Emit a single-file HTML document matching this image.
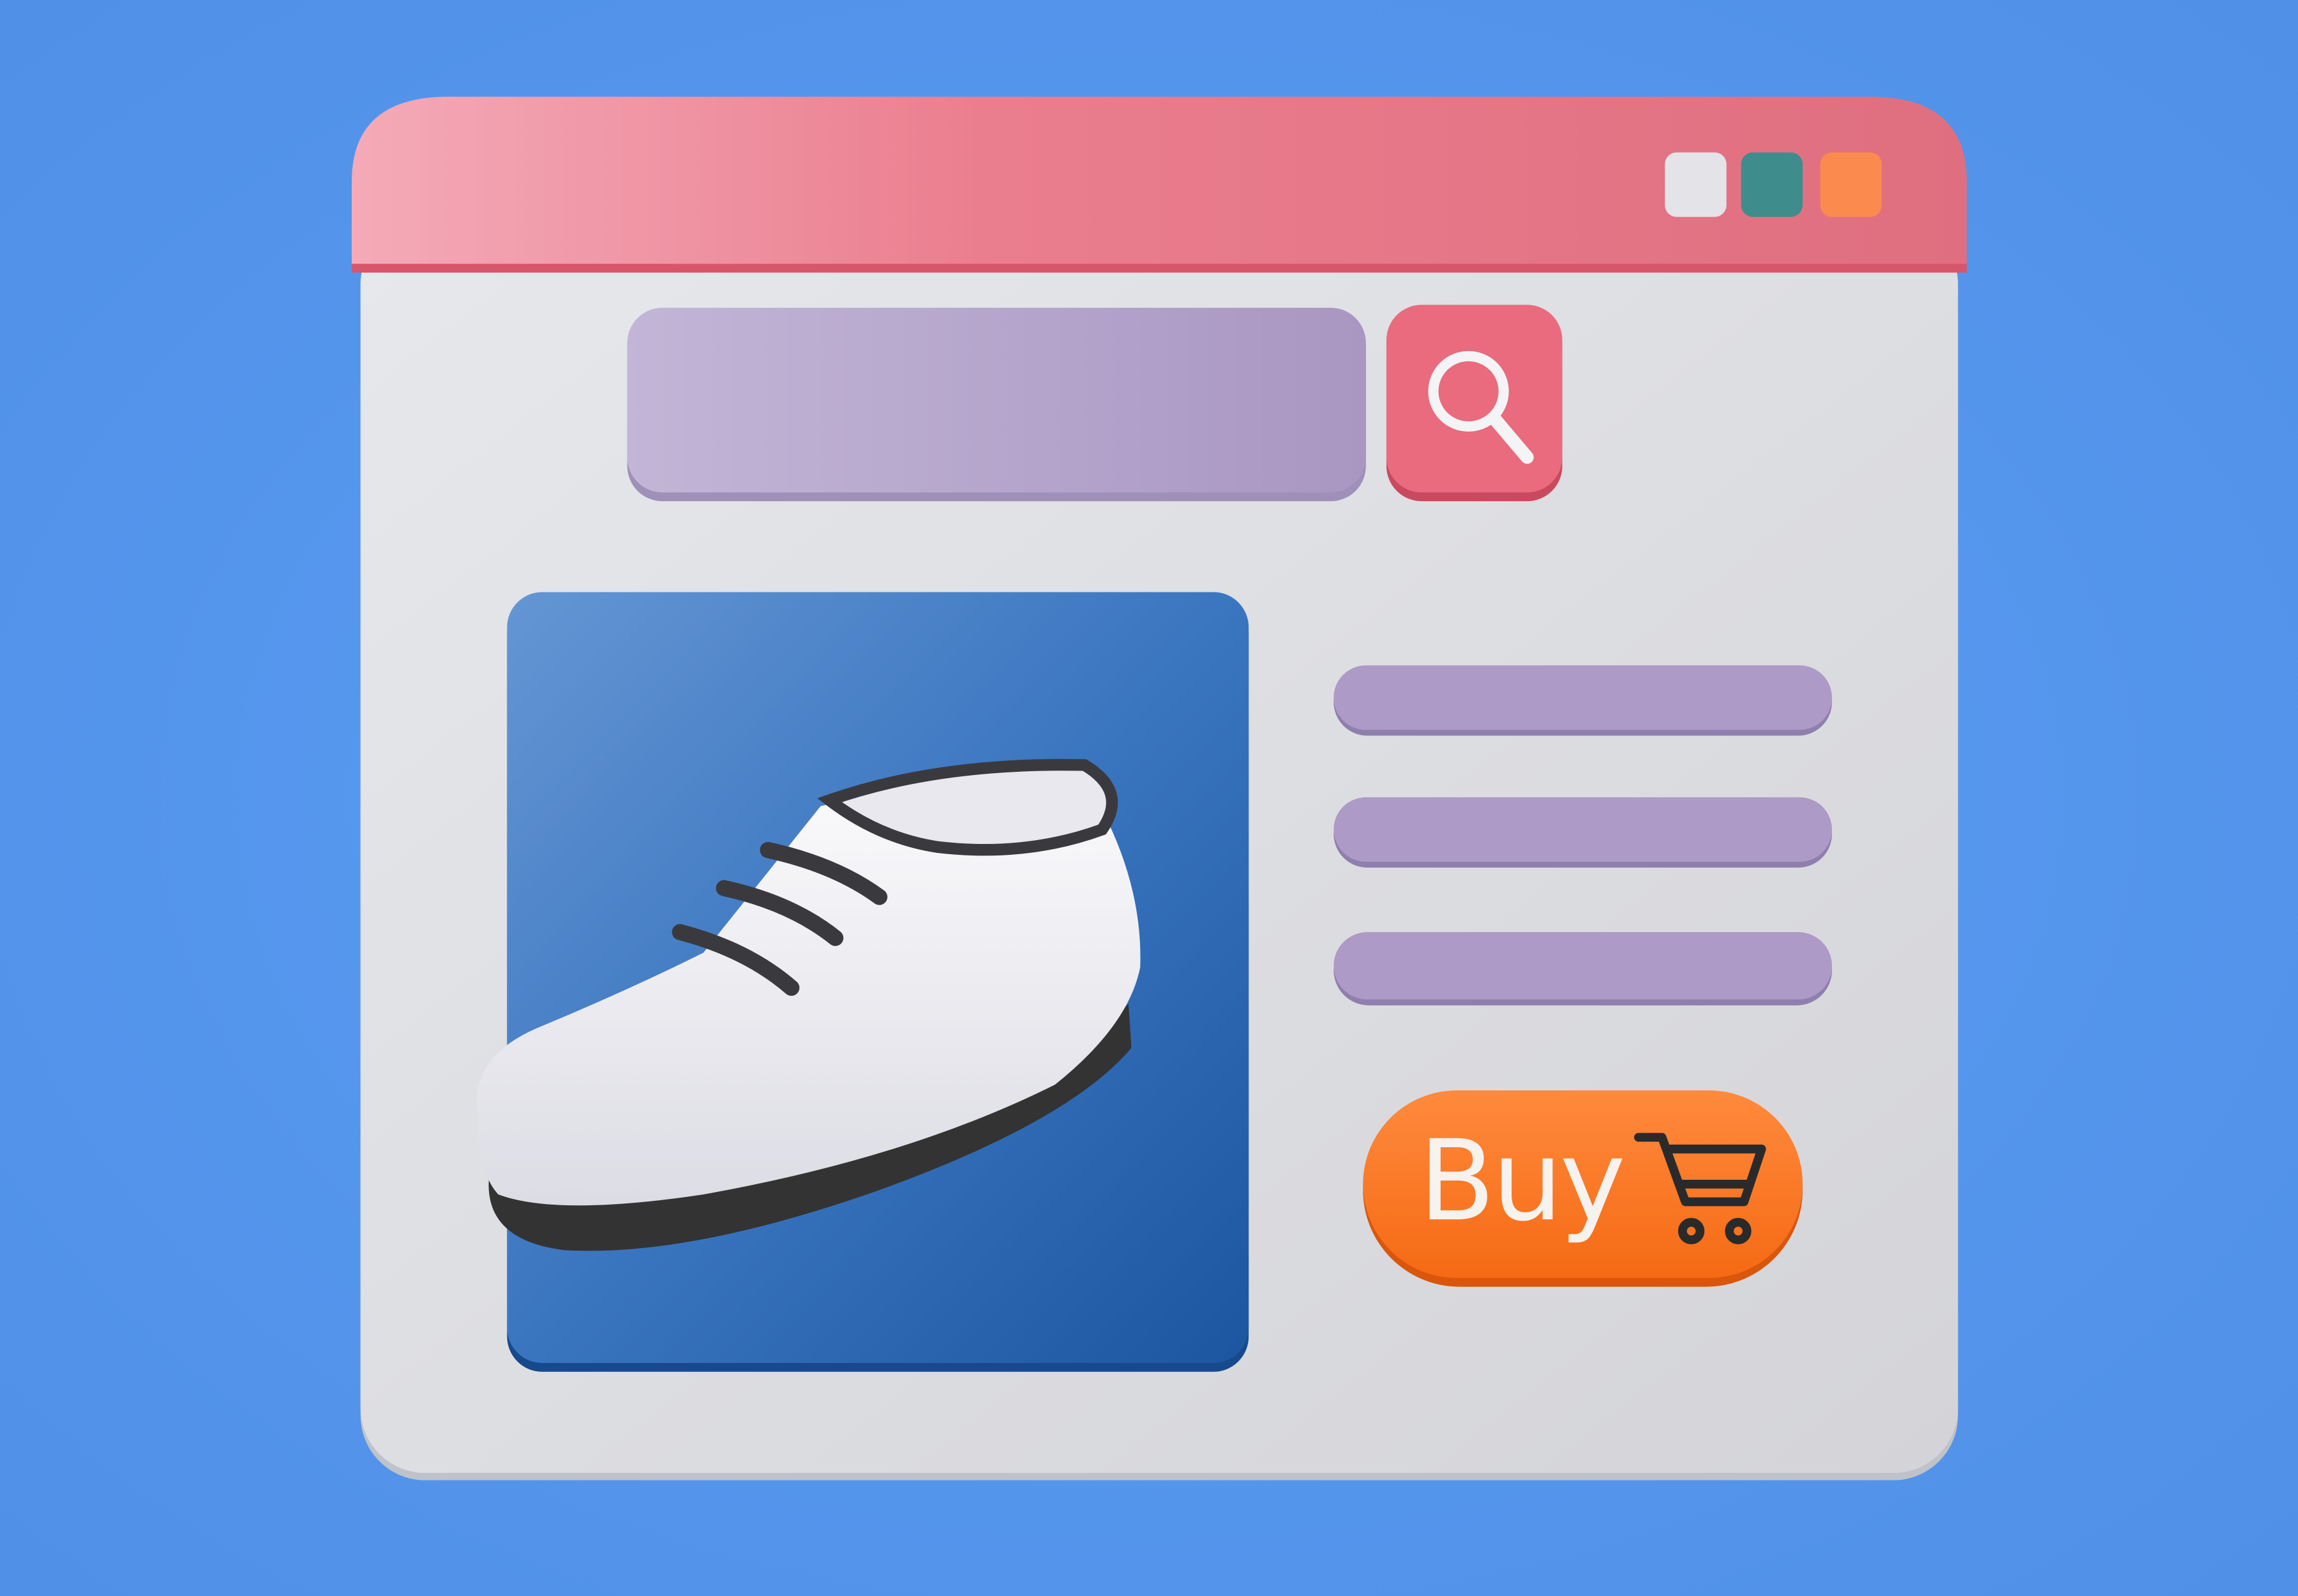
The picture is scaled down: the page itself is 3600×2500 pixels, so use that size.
<!DOCTYPE html>
<html><head><meta charset="utf-8"><style>
html,body{margin:0;padding:0;width:3600px;height:2500px;overflow:hidden;background:#5597ee}
svg{display:block}
</style></head><body>
<svg width="3600" height="2500" viewBox="0 0 1568 1089" preserveAspectRatio="none" xmlns="http://www.w3.org/2000/svg">
<defs>
<radialGradient id="bg" cx="50%" cy="50%" r="70%"><stop offset="0" stop-color="#5c9ef7"/><stop offset="1" stop-color="#5090e6"/></radialGradient>
<linearGradient id="hdr" x1="0" x2="1"><stop offset="0" stop-color="#f4aab8"/><stop offset=".4" stop-color="#ea7d8e"/><stop offset="1" stop-color="#df6f7f"/></linearGradient>
<linearGradient id="body" x1="0" x2="1" y1="0" y2="1"><stop offset="0" stop-color="#e6e8ec"/><stop offset="1" stop-color="#d4d4d8"/></linearGradient>
<linearGradient id="srch" x1="0" x2="1"><stop offset="0" stop-color="#c2b5d6"/><stop offset="1" stop-color="#a996c2"/></linearGradient>
<linearGradient id="img" x1="0" x2="1" y1="0" y2="1"><stop offset="0" stop-color="#6496d4"/><stop offset=".5" stop-color="#3a75bf"/><stop offset="1" stop-color="#1d56a0"/></linearGradient>
<linearGradient id="shoe" x1="0" x2="0" y1="0" y2="1"><stop offset="0" stop-color="#fafafc"/><stop offset="1" stop-color="#dcdce4"/></linearGradient>
<linearGradient id="buy" x1="0" x2="0" y1="0" y2="1"><stop offset="0" stop-color="#ff8a3d"/><stop offset="1" stop-color="#f56a14"/></linearGradient>
</defs>
<rect width="1568" height="1089" fill="url(#bg)"/>
<rect x="246" y="150" width="1090" height="860" rx="44" fill="#bfc2c8"/>
<rect x="246" y="150" width="1090" height="855" rx="44" fill="url(#body)"/>
<path d="M240 186 V124 Q240 66 306 66 H1276 Q1342 66 1342 124 V186 Z" fill="url(#hdr)"/>
<rect x="240" y="180" width="1102" height="6" fill="#d8566a"/>
<rect x="1136" y="104" width="42" height="44" rx="8" fill="#e4e4e8"/>
<rect x="1188" y="104" width="42" height="44" rx="8" fill="#3f8c8c"/>
<rect x="1242" y="104" width="42" height="44" rx="8" fill="#fb8a4e"/>
<rect x="428" y="212" width="504" height="130" rx="24" fill="#9f90b9"/>
<rect x="428" y="210" width="504" height="126" rx="24" fill="url(#srch)"/>
<rect x="946" y="210" width="120" height="132" rx="24" fill="#c94a5e"/>
<rect x="946" y="208" width="120" height="128" rx="24" fill="#e96b7d"/>
<circle cx="1002" cy="267" r="24" fill="none" stroke="#f4f4f6" stroke-width="7"/>
<line x1="1020" y1="286" x2="1042" y2="312" stroke="#f4f4f6" stroke-width="9" stroke-linecap="round"/>
<rect x="346" y="408" width="506" height="528" rx="24" fill="#164a8c"/>
<rect x="346" y="404" width="506" height="526" rx="24" fill="url(#img)"/>
<rect x="910" y="456" width="340" height="46" rx="23" fill="#8f7fae"/>
<rect x="910" y="454" width="340" height="44" rx="22" fill="#ad9ac6"/>
<rect x="910" y="546" width="340" height="46" rx="23" fill="#8f7fae"/>
<rect x="910" y="544" width="340" height="44" rx="22" fill="#ad9ac6"/>
<rect x="910" y="638" width="340" height="48" rx="24" fill="#8f7fae"/>
<rect x="910" y="636" width="340" height="46" rx="23" fill="#ad9ac6"/>
<rect x="930" y="746" width="300" height="132" rx="66" fill="#d9560c"/>
<rect x="930" y="744" width="300" height="128" rx="64" fill="url(#buy)"/>
<text x="968" y="832" font-family="DejaVu Sans, sans-serif" font-size="76" fill="#f6f2ee" letter-spacing="-2">Buy</text>
<g fill="none" stroke="#2a2a2a" stroke-width="6" stroke-linecap="round" stroke-linejoin="round">
<path d="M1118 776 H1134 L1150 820 H1190 L1202 784 H1140"/>
<path d="M1146 808 H1194"/>
<circle cx="1154" cy="840" r="6"/><circle cx="1186" cy="840" r="6"/>
</g>
<path d="M334 800 Q328 846 385 853 Q470 858 600 812 Q730 765 772 715 L770 685 Q700 760 560 790 Q420 812 334 800 Z" fill="#333"/>
<path d="M326 760 Q320 720 370 700 Q430 675 480 650 L560 550 Q650 530 745 540 Q780 600 778 660 Q770 700 720 740 Q620 790 480 815 Q380 830 340 815 Q326 800 326 760 Z" fill="url(#shoe)"/>
<path d="M566 546 Q640 520 740 522 Q770 540 752 566 Q700 585 640 578 Q600 572 566 546 Z" fill="#e8e8ee" stroke="#3a3a3e" stroke-width="8"/>
<g stroke="#3a3a3e" stroke-width="11" stroke-linecap="round" fill="none">
<path d="M524 580 Q570 590 600 612"/>
<path d="M494 606 Q540 616 570 640"/>
<path d="M464 636 Q510 648 540 674"/>
</g>
</svg>
</body></html>
